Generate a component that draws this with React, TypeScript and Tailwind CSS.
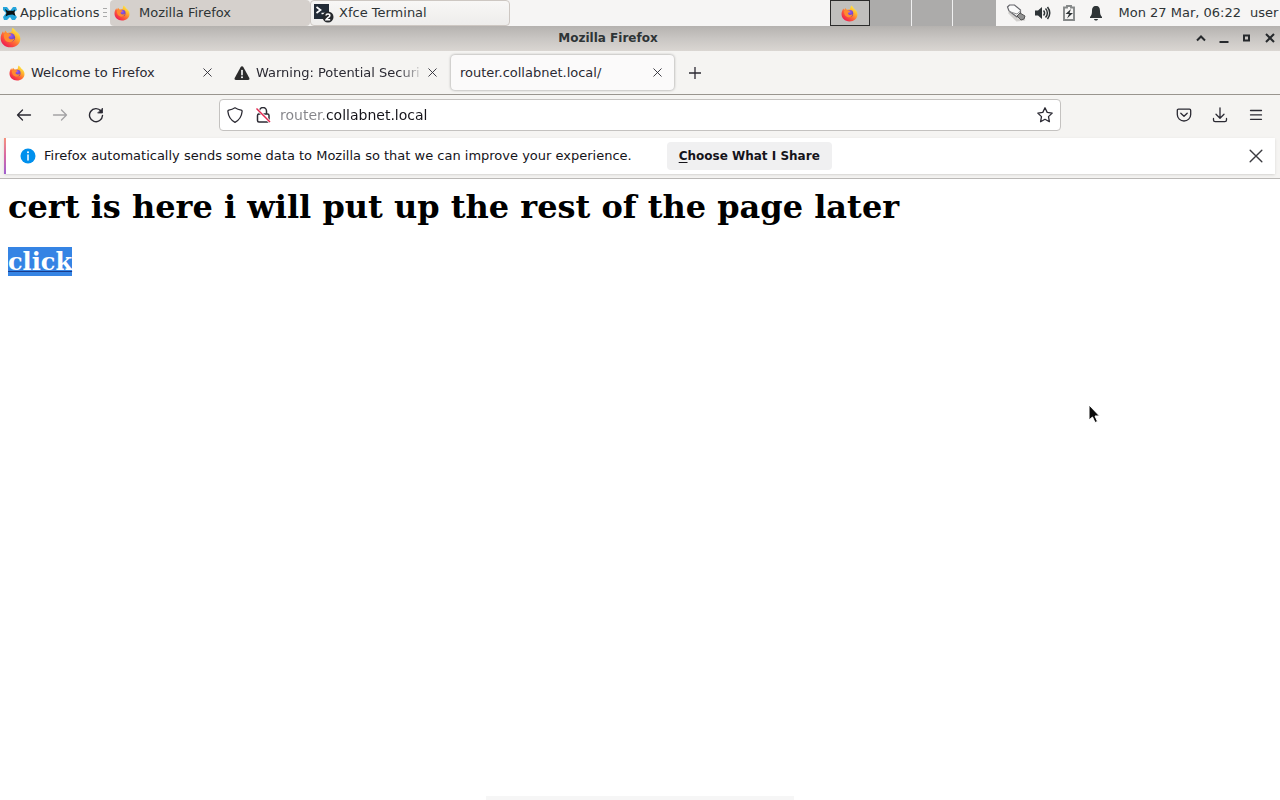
import { useId } from "react"
import type { ReactNode } from "react"

type TabType = {
  title: string
  icon?: "firefox" | "warning"
  active?: boolean
}

const tabs: TabType[] = [
  { title: "Welcome to Firefox", icon: "firefox" },
  { title: "Warning: Potential Securi", icon: "warning" },
  { title: "router.collabnet.local/", active: true },
]

const FirefoxLogo = ({ className }: { className: string }) => {
  const id = useId()
  return (
    <svg viewBox="0 0 32 32" className={className} aria-hidden="true">
      <defs>
        <linearGradient id={`${id}a`} x1="0.85" y1="0.1" x2="0.2" y2="0.9">
          <stop offset="0" stopColor="#fff04a" />
          <stop offset="0.3" stopColor="#ffb52e" />
          <stop offset="0.6" stopColor="#ff6a35" />
          <stop offset="1" stopColor="#f0204f" />
        </linearGradient>
        <radialGradient id={`${id}b`} cx="0.5" cy="0.3" r="0.7">
          <stop offset="0" stopColor="#9a5cf5" />
          <stop offset="1" stopColor="#5b3ab0" />
        </radialGradient>
      </defs>
      <path
        d="M19 1c3 2 4.500 4 5.500 6 3.500 2 6.500 6 6.500 11 0 8-6.500 13-15 13S1 25 1 17c0-4 1.500-7 3.500-10.500L6 10l2-4.500L11 9c2 0 4-1 6-1 1-2 1-5 2-7z"
        fill={`url(#${id}a)`}
      />
      <circle cx="16.500" cy="16" r="6.500" fill={`url(#${id}b)`} />
      <path d="M6 11c3-2.500 6-2 8-.5 2 0 3 .5 3 1.500-1 2-4 2-4 4 1 3 5 4 9 1-1 5-5 7-9 6-5-1-8-6-7-12z" fill="#ff8a30" />
    </svg>
  )
}

const WarningIcon = () => (
  <svg viewBox="0 0 16 16" className="size-4 shrink-0" aria-hidden="true">
    <path d="M8 1.200c.6 0 1 .3 1.300.8l6 11c.5 1-.1 2-1.200 2H1.900c-1.100 0-1.700-1-1.200-2l6-11c.3-.5.700-.8 1.300-.8z" fill="#2b2b2b" />
    <path d="M8 5.500v4.300" stroke="#fff" strokeWidth="1.600" strokeLinecap="round" />
    <circle cx="8" cy="12.300" r="1" fill="#fff" />
  </svg>
)

const CloseIcon = ({ className }: { className: string }) => (
  <svg viewBox="0 0 12 12" className={className} fill="none" stroke="currentColor" aria-hidden="true">
    <path d="M1 1l10 10M11 1L1 11" strokeWidth="1.200" strokeLinecap="round" />
  </svg>
)

const Panel = () => (
  <header className="flex h-[26px] items-stretch bg-[#f6f5f4] text-[13px] text-[#2e3436]">
    <button className="flex w-[110px] items-center gap-[2px] pl-[2px] whitespace-nowrap">
      <svg viewBox="0 0 16 16" className="size-4 shrink-0" aria-hidden="true">
        <path d="M1 2l4 0 3 4 3-4h3l1 3-4 3 4 4-2 3h-3l-2-3-3 3H2l-1-3 3-4-3-3z" fill="#25a5dc" />
        <path d="M3 4l3 2c2-.5 4-.5 5 0l2-1.500-.5 3 1 3.500-3-1.500-4 .5-3 1.500 1-3.500z" fill="#0b1114" />
      </svg>
      Applications
      <svg viewBox="0 0 4 10" className="ml-[2px] h-[10px] w-1 shrink-0" stroke="#aaa" aria-hidden="true">
        <path d="M0 .5h4M0 4.500h4M0 8.500h4" />
      </svg>
    </button>
    <button className="flex w-[200px] items-center gap-[9px] rounded-sm bg-[#d5d0cc] pl-1">
      <FirefoxLogo className="size-4 shrink-0" />
      Mozilla Firefox
    </button>
    <button className="flex w-[200px] items-center gap-[5px] rounded-sm border border-[#cdc7c2] bg-gradient-to-b from-[#f8f7f6] to-[#eeedeb] pl-[3px]">
      <svg viewBox="0 0 20 20" className="size-5 shrink-0" aria-hidden="true">
        <path d="M0 1h15v15H0z" fill="#232c37" />
        <path d="M2.500 4l4 3-4 3M7.500 10.500h4" fill="none" stroke="#fff" strokeWidth="1.700" />
        <circle cx="14" cy="14" r="5.500" fill="#26292c" />
        <path d="M12 12.500c.2-2 4-2 3.800.2 0 1.300-3.300 2.500-3.800 4.100h4.200" fill="none" stroke="#fff" strokeWidth="1.600" />
      </svg>
      Xfce Terminal
    </button>
    <div className="flex-1" />
    <div className="flex bg-[#acabaa]">
      <button aria-label="Workspace 1" className="flex w-10 items-center justify-center border border-[#2b2b2b] bg-[#c0bfbd]">
        <FirefoxLogo className="size-[17px]" />
      </button>
      <button aria-label="Workspace 2" className="w-[42px] border-r border-[#f0f0f0]" />
      <button aria-label="Workspace 3" className="w-[41px] border-r border-[#f0f0f0]" />
      <button aria-label="Workspace 4" className="w-[43px]" />
    </div>
    <div className="flex items-center gap-[9px] pl-[10px] whitespace-nowrap">
      <svg viewBox="0 0 20 18" className="h-[18px] w-5" fill="none" aria-hidden="true">
        <path d="M3 8l8 8 8-1" stroke="#d2d0ce" strokeWidth="3" />
        <path d="M1.500 3l2-2h5l6 5v5L11 13 3 7z" fill="#fafafa" stroke="#65656a" strokeWidth="1.200" />
        <path d="M3 7.500l8 2.500 4-3.500" stroke="#909090" />
        <path d="M11 12l3-3 5 3-1 3-3 1z" fill="#919191" stroke="#555" />
      </svg>
      <svg viewBox="0 0 16 16" className="size-4" fill="none" stroke="#2e3436" aria-hidden="true">
        <path d="M0 5.500h3l4-3.500v12l-4-3.500H0z" fill="#2e3436" stroke="none" />
        <path d="M8.500 5.500c1.300 1.500 1.300 3.500 0 5M10.500 3.500c2.500 2.500 2.500 6.500 0 9M12.500 2c3 4 3 8 0 12" strokeWidth="1.500" />
      </svg>
      <svg viewBox="0 0 16 16" className="mx-px size-4" aria-hidden="true">
        <path d="M6 1h4v1.500h3v12.500H3V2.500h3z" fill="#f6f5f4" stroke="#858888" strokeWidth="1.900" />
        <path d="M10 4L4.500 9H8l-2 4.500L12 8H8.500z" fill="#2e3436" />
      </svg>
      <svg viewBox="0 0 16 16" className="mx-px size-4" fill="#2e3436" aria-hidden="true">
        <path d="M8 1c3 0 4 2 4 5 0 3 .5 4.500 2 6v1H2v-1c1.500-1.500 2-3 2-6 0-3 1-5 4-5zM6 14h4c-.5 2-3.500 2-4 0z" />
      </svg>
      <time className="ml-[5px]">Mon 27 Mar, 06:22</time>
      <button className="w-[30px] text-left">user</button>
    </div>
  </header>
)

const TitleBar = () => (
  <div className="flex h-[25px] items-center bg-gradient-to-b from-[#b5b2af] via-[#c9c6c3] to-[#dad6d2] pb-[2px]">
    <FirefoxLogo className="size-[21px]" />
    <div className="flex-1 text-center text-[12px] font-bold text-[#2e3436]">Mozilla Firefox</div>
    <div className="flex items-center gap-[11px] pr-1 text-[#26292c]">
      {[
        { label: "Shade", path: "M2 8.500l4-4 4 4" },
        { label: "Minimize", path: "M1.500 10h9" },
        { label: "Maximize", path: "M3 3.500h5v5H3z" },
        { label: "Close", path: "M2 2l8 8M10 2l-8 8" },
      ].map((item) => (
        <button key={item.label} aria-label={item.label}>
          <svg viewBox="0 0 12 12" className="size-3" fill="none" stroke="currentColor" strokeWidth="2">
            <path d={item.path} />
          </svg>
        </button>
      ))}
    </div>
  </div>
)

const Tab = ({ tab }: { tab: TabType }) => {
  const { title, icon, active } = tab
  return (
    <div
      className={
        active
          ? "mx-px flex w-[223px] items-center gap-[6px] rounded-sm bg-[#fbfafa] px-[9px] shadow-[0_0_3px_rgba(0,0,0,0.4)]"
          : "flex w-[225px] items-center gap-[6px] pr-[10px] pl-[9px]"
      }
    >
      {icon === "firefox" && <FirefoxLogo className="size-4 shrink-0" />}
      {icon === "warning" && <WarningIcon />}
      <button
        className={
          icon === "warning"
            ? "-mr-[6px] flex-1 mask-r-from-85% text-left whitespace-nowrap"
            : "-mr-[6px] flex-1 text-left whitespace-nowrap"
        }
      >
        {title}
      </button>
      <button aria-label={`Close ${title}`} className="flex w-4 shrink-0 justify-center">
        <CloseIcon className="size-[9px]" />
      </button>
    </div>
  )
}

const ToolButton = ({ label, disabled, children }: { label: string; disabled?: boolean; children: ReactNode }) => (
  <button aria-label={label} disabled={disabled} className="flex h-8 w-9 items-center justify-center disabled:opacity-40">
    <svg viewBox="0 0 16 16" className="size-4" fill="none" stroke="currentColor" strokeWidth="1.300" strokeLinecap="round" strokeLinejoin="round">
      {children}
    </svg>
  </button>
)

const NavBar = () => (
  <div className="flex h-10 items-center border-t border-[#99958f] px-[6px] pt-px text-[#2b2a33]">
    <ToolButton label="Back">
      <path d="M14.500 8H1.500M6.500 3L1.500 8l5 5" />
    </ToolButton>
    <ToolButton label="Forward" disabled>
      <path d="M1.500 8h13M9.500 3l5 5-5 5" />
    </ToolButton>
    <ToolButton label="Reload">
      <path d="M13 4A6.500 6.500 0 1 0 14.500 8.500" strokeWidth="1.400" />
      <path d="M14.500 1.500v4.500H10z" fill="currentColor" strokeWidth="0.800" />
    </ToolButton>
    <div className="flex-1" />
    <div className="flex h-8 flex-8 items-center rounded-sm border border-[#c4c2c0] bg-white">
      <button aria-label="Tracking protection" className="flex w-[30px] justify-center">
        <svg viewBox="0 0 16 16" className="size-4" fill="none" stroke="#2b2a33" strokeWidth="1.300" strokeLinejoin="round">
          <path d="M8 .8c2 1.300 4 2 6.200 2.400.8.2 1 .5.900 1.300C14.600 9.500 12.500 13 8 15.300 3.500 13 1.400 9.500.9 4.500c-.1-.8.100-1.100.9-1.300C4 2.800 6 2.100 8 .8z" />
        </svg>
      </button>
      <button aria-label="Connection is not secure" className="flex w-[26px] justify-center">
        <svg viewBox="0 0 16 16" className="size-4" fill="none" stroke="#2b2a33" strokeWidth="1.500">
          <path d="M4.500 7V4a3.500 3.500 0 0 1 7 0v3" />
          <rect x="2.500" y="7" width="11.500" height="8" rx="1.500" />
          <path d="M2 2l13 13" stroke="#fff" strokeWidth="3" />
          <path d="M1.500 1.500l13.500 13.500" stroke="#e22850" strokeWidth="1.500" />
        </svg>
      </button>
      {/* the subdomain is dimmed through the gradient behind the clipped text */}
      <input
        aria-label="Address"
        defaultValue="router.collabnet.local"
        className="ml-1 h-full min-w-0 flex-1 bg-[linear-gradient(to_right,#85858a_46px,#15141a_46px)] bg-clip-text text-[14px] text-transparent outline-none"
      />
      <button aria-label="Bookmark this page" className="flex w-[30px] justify-center">
        <svg viewBox="0 0 16 16" className="size-4" fill="none" stroke="#2b2a33" strokeWidth="1.300" strokeLinejoin="round">
          <path d="M8 .8l2.200 4.600 5 .7-3.700 3.500.9 5.100L8 12.300l-4.400 2.400.9-5.100L.8 6.100l5-.7z" />
        </svg>
      </button>
    </div>
    <div className="flex-1" />
    <ToolButton label="Save to Pocket">
      <path d="M2.500 2.200h11c.7 0 1.200.5 1.200 1.200V7.500a6.700 6.500 0 0 1-13.400 0V3.400c0-.7.500-1.200 1.200-1.200z" />
      <path d="M4.800 6.200L8 9.300l3.200-3.100" />
    </ToolButton>
    <ToolButton label="Downloads">
      <path d="M8 .8v10M4 7.200l4 4 4-4M1.500 11.500v1.500c0 1 .6 1.700 1.700 1.700h9.600c1.100 0 1.700-.7 1.700-1.700v-1.500" />
    </ToolButton>
    <ToolButton label="Menu">
      <path d="M2.500 3.500h11M2.500 7.900h11M2.500 12.300h11" />
    </ToolButton>
  </div>
)

const Notification = () => (
  <div className="border-b border-[#bbb9b7] pt-[4px] pr-[5px] pb-1 pl-1">
    <div className="flex h-9 items-center bg-white text-[13px] text-[#15141a] shadow-sm">
      <div className="h-full w-[2px] bg-gradient-to-b from-[#f5927c] via-[#d767a4] to-[#a05fcf]" />
      <svg viewBox="0 0 16 16" className="ml-[14px] size-4" aria-hidden="true">
        <circle cx="8" cy="8" r="7.500" fill="#0090ed" />
        <path d="M8 7v5" stroke="#fff" strokeWidth="1.500" strokeLinecap="round" />
        <circle cx="8" cy="4.300" r="1" fill="#fff" />
      </svg>
      <p className="ml-2">Firefox automatically sends some data to Mozilla so that we can improve your experience.</p>
      <button className="ml-[35px] h-7 rounded-sm bg-[#f0f0f1] px-3 text-[12px] font-bold">
        <span className="underline underline-offset-2">C</span>hoose What I Share
      </button>
      <div className="flex-1" />
      <button aria-label="Close notification" className="mr-3 text-[#3b3b40]">
        <CloseIcon className="size-[14px]" />
      </button>
    </div>
  </div>
)

const App = () => {
  return (
    <div className="relative flex min-h-screen flex-col overflow-hidden bg-white font-['DejaVu_Sans',sans-serif]">
      <Panel />
      <TitleBar />
      <div className="bg-[#f5f4f2]">
        <nav className="flex h-[43px] py-1 text-[13px] text-[#2b2a33]">
          {tabs.map((tab) => (
            <Tab key={tab.title} tab={tab} />
          ))}
          <button aria-label="New tab" className="flex w-[39px] items-center justify-center">
            <svg viewBox="0 0 12 12" className="size-3" stroke="currentColor" strokeWidth="1.300">
              <path d="M6 0v12M0 6h12" />
            </svg>
          </button>
        </nav>
        <NavBar />
        <Notification />
      </div>
      <main className="flex-1 px-2 py-[9px] font-['DejaVu_Serif',serif] font-bold text-black">
        <h1 className="text-[32px] leading-[38px]">cert is here i will put up the rest of the page later</h1>
        <h2 className="mt-[21px] text-[24px] leading-[29px]">
          <a href="#" className="inline-block bg-[#3584e4] text-white underline decoration-[#1a3c8c] decoration-1">click</a>
        </h2>
      </main>
      <div className="mx-auto h-1 w-[308px] bg-[#f6f6f6]" />
      <svg viewBox="0 0 12 20" className="absolute top-[404px] left-[1088px] h-5 w-3" aria-hidden="true">
        <path d="M1 1v15l3.500-3 2.500 5.500 2.500-1-2.500-5.500h4.500z" fill="#0c0c0c" stroke="#fff" />
      </svg>
    </div>
  )
}

export default App
